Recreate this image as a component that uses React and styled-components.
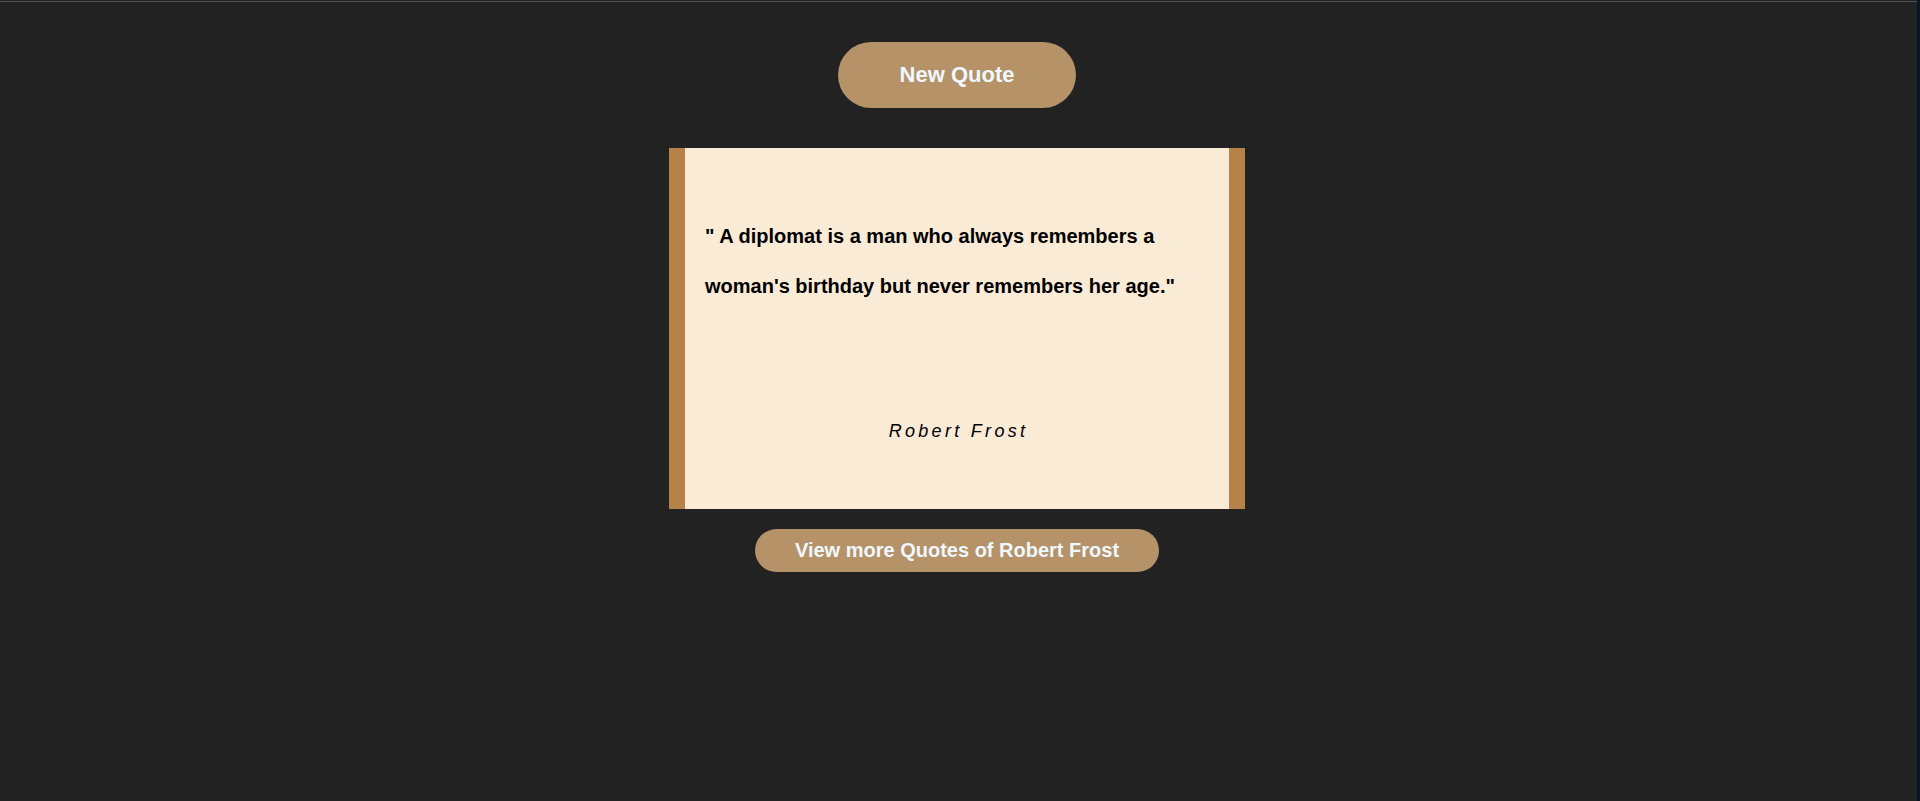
import React, { useState } from "react";
import styled, { createGlobalStyle } from "styled-components";

const quotes = [
  {
    text: "\" A diplomat is a man who always remembers a woman's birthday but never remembers her age.\"",
    author: "Robert Frost",
  },
];

const App = () => {
  const [index, setIndex] = useState(0);
  const quote = quotes[index];

  const newQuoteHandler = () => {
    setIndex((index + 1) % quotes.length);
  };

  return (
    <PageStyled>
      <GlobalStyle />
      <MainStyled>
        <TopRuleStyled />
        <ContentStyled>
          <NewQuoteButton onClick={newQuoteHandler}>New Quote</NewQuoteButton>
          <QuoteCardStyled>
            <QuoteTextStyled>{quote.text}</QuoteTextStyled>
            <AuthorStyled>{quote.author}</AuthorStyled>
          </QuoteCardStyled>
          <MoreButton>View more Quotes of {quote.author}</MoreButton>
        </ContentStyled>
      </MainStyled>
      <ScrollEdgeStyled />
    </PageStyled>
  );
};

const GlobalStyle = createGlobalStyle`
  html, body {
    margin: 0;
    padding: 0;
    background: #222222;
  }
  body {
    font-family: "Liberation Sans", Arial, sans-serif;
  }
`;

const PageStyled = styled.div`
  display: flex;
  height: 100vh;
  background: #222222;
  overflow: hidden;
`;

const MainStyled = styled.div`
  flex: 1;
  display: flex;
  flex-direction: column;
  padding-right: 3px;
`;

const TopRuleStyled = styled.div`
  height: 1px;
  margin-top: 1px;
  margin-right: -3px;
  background: #4f4f56;
`;

const ContentStyled = styled.div`
  display: flex;
  flex-direction: column;
  align-items: center;
  padding-top: 40px;
`;

const ScrollEdgeStyled = styled.div`
  width: 3px;
  background: #0b1221;
`;

const PillButton = styled.button`
  border: none;
  background: #b59267;
  color: #f0f8ff;
  font-family: "Liberation Sans", Arial, sans-serif;
  font-weight: 700;
  cursor: pointer;
`;

const NewQuoteButton = styled(PillButton)`
  width: 238px;
  height: 66px;
  padding: 0;
  border-radius: 33px;
  font-size: 22px;
  line-height: 26px;
`;

const QuoteCardStyled = styled.div`
  box-sizing: border-box;
  width: 576px;
  height: 361px;
  margin-top: 40px;
  padding: 63px 20px 0;
  background: #faebd7;
  border-left: 16px solid #b5834a;
  border-right: 16px solid #b5834a;
  color: #000;
`;

const QuoteTextStyled = styled.p`
  margin: 0;
  font-size: 20px;
  font-weight: 700;
  line-height: 50px;
`;

const AuthorStyled = styled.p`
  margin: 110px 0 0;
  text-align: center;
  font-size: 18px;
  font-style: italic;
  line-height: 21px;
  letter-spacing: 3.3px;
  padding-left: 3px;
`;

const MoreButton = styled(PillButton)`
  margin-top: 20px;
  padding: 10px 40px;
  border-radius: 22px;
  font-size: 20px;
  line-height: 23px;
`;

export default App;
